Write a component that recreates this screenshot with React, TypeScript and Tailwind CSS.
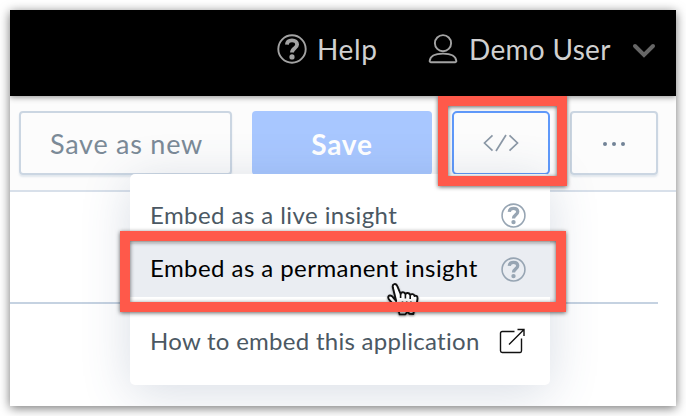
import type { ReactNode } from "react";

function HelpIcon({ size, className }: { size: number; className: string }) {
  return (
    <svg width={size} height={size} viewBox="0 0 30 30" fill="none" stroke="currentColor" className={`shrink-0 ${className}`}>
      <circle cx="15" cy="15" r="13.7" strokeWidth="1.9" />
      <path d="M9.900 10.700c.2-2.900 2.100-4.300 5.100-4.300 3.100 0 5.100 1.600 5.100 4.200 0 3.800-5.100 3.600-5.100 7.900" strokeWidth="3.9" />
      <circle cx="15" cy="22.900" r="2.600" fill="currentColor" stroke="none" />
    </svg>
  );
}

function UserIcon() {
  return (
    <svg width="30" height="30" viewBox="0 0 30 30" fill="none" stroke="currentColor" strokeWidth="1.9" className="shrink-0 text-[#a3a3a3]">
      <circle cx="15" cy="9.2" r="8.1" />
      <path d="M2.7 28.2h24.6c.7 0 1.1-.6 1-1.4-.5-4.5-5.500-7.200-13.300-7.200S2.200 22.300 1.700 26.800c-.1.8.3 1.400 1 1.400z" />
    </svg>
  );
}

function CodeIcon() {
  return (
    <svg width="36" height="18" viewBox="0 0 36 18" fill="none" stroke="#8b98a6" strokeWidth="1.700">
      <path d="M9.500 1.300 1.500 9l8 7.700M23 1 13 17M26.500 1.300l8 7.700-8 7.700" />
    </svg>
  );
}

function ExternalIcon() {
  return (
    <svg width="26" height="26" viewBox="0 0 26 26" fill="none" stroke="#111" strokeWidth="1.400" className="mr-px shrink-0">
      <path d="M15.500 3.500H3.200c-1 0-1.700.7-1.700 1.700v17.600c0 1 .7 1.700 1.700 1.700h18c1 0 1.300-.7 1.300-1.700V10.500M10 16.500 25 1.500M18.500 1.500H25V8" />
    </svg>
  );
}

function HandCursor() {
  return (
    <svg width="34" height="36" viewBox="0 0 34 36" fill="none" className="absolute left-[386px] top-[282px] z-30 drop-shadow-[0_1px_1px_rgba(0,0,0,0.4)]">
      <path
        d="M10.200 19 6.800 5.300C6.200 1.700 10 .8 11.300 4.200L14.600 12c.7-2.300 4-2.300 4.800.3.900-2 4-1.600 4.800.8 1.200-1.600 3.800-1.200 4.300.9 1.600-.9 3.200.2 3 2.600-.2 4-.7 6.400-2.600 9.700-1 1.700-1.500 3-1.500 5.700l-4-.2-1.700-2.200-2.500 2.800h-5.600c-.2-3-1.600-4.600-3.600-7.200L4 18.600C.5 15 3 12.200 6 14.200z"
        fill="#fff"
        stroke="#111"
        strokeWidth="1.900"
        strokeLinejoin="round"
      />
      <path d="M14.600 12v4M19.400 13v3.500M24.200 14v3M16.500 19.500v6M20.700 19.500v6M24.900 19.500v6" stroke="#111" strokeWidth="1.600" />
    </svg>
  );
}

function MenuRow({ label, labelClass, className, children }: { label: string; labelClass: string; className: string; children: ReactNode }) {
  return (
    <div className={`flex items-center justify-between pl-5 pr-[24px] whitespace-nowrap text-[24px] ${className}`}>
      <span className={labelClass}>{label}</span>
      {children}
    </div>
  );
}

export default function App() {
  return (
    <div className="relative h-[416px] w-[686px] overflow-hidden bg-white p-[10px] font-['Lato',sans-serif]">
      <div className="h-[396px] w-[666px] shadow-[0_2px_10px_rgba(0,0,0,0.55)]">
        <div className="relative h-full w-full overflow-hidden bg-white">
          <header className="relative z-10 flex h-[86px] items-center bg-black pl-[267px] pb-[8px] text-[28px] text-[#d0d0d0] shadow-[0_1px_6px_rgba(0,0,0,0.45)]">
            <HelpIcon size={30} className="text-[#a3a3a3]" />
            <span className="ml-[10px] w-[111px] tracking-[0.6px]">Help</span>
            <UserIcon />
            <span className="ml-[11px] w-[163px] whitespace-nowrap tracking-[0.3px]">Demo User</span>
            <svg width="24" height="16" viewBox="0 0 24 16" fill="none" stroke="#666" strokeWidth="4" strokeLinecap="round" className="mt-[4px] shrink-0">
              <path d="m3 3 9 9 9-9" />
            </svg>
          </header>
          <div className="flex h-[96px] items-start border-b-2 border-[#d8e0ea] bg-[#fcfcfc] pl-[9px] pt-[15px] text-[27px]">
            <div className="flex h-[64px] w-[213px] items-center justify-center rounded-[4px] border-2 border-[#cbd6e2] pt-[3px] text-[#7b8a97] shadow-[0_2px_2px_rgba(120,150,180,0.2)]">
              <span className="ml-[2px] whitespace-nowrap tracking-[0.75px]">Save as new</span>
            </div>
            <div className="ml-[20px] flex h-[64px] w-[180px] items-center justify-center rounded-[4px] bg-[#a8c7ff] pt-px text-[28px] font-bold tracking-[0.8px] text-white">Save</div>
            <div className="ml-[20px] flex h-[64px] w-[98px] items-center justify-center rounded-[5px] border-2 border-[#5f99fa]">
              <CodeIcon />
            </div>
            <div className="ml-[20px] flex h-[64px] w-[88px] items-center justify-center gap-[5px] rounded-[4px] border-2 border-[#cbd6e2] pt-[2px] shadow-[0_2px_2px_rgba(120,150,180,0.2)]">
              <i className="h-1 w-1 rounded-full bg-[#728397]" />
              <i className="h-1 w-1 rounded-full bg-[#728397]" />
              <i className="h-1 w-1 rounded-full bg-[#728397]" />
            </div>
          </div>
          <div className="mt-[110px] h-[2px] w-[648px] bg-[#c5d2e1]" />
          <div className="absolute left-[120px] top-[164px] z-20 flex h-[211px] w-[420px] flex-col rounded-[5px] bg-white pt-[15px] text-[#4b5863] shadow-[0_8px_50px_rgba(60,85,125,0.2)]">
            <MenuRow label="Embed as a live insight" labelClass="tracking-[0.43px]" className="h-[54px] pb-[2px]">
              <HelpIcon size={25} className="text-[#97a5b3]" />
            </MenuRow>
            <MenuRow label="Embed as a permanent insight" labelClass="-mt-[2px] tracking-[0.43px]" className="h-[54px] bg-[#eaedf2] pb-[2px] text-black">
              <HelpIcon size={25} className="text-[#97a5b3]" />
            </MenuRow>
            <MenuRow label="How to embed this application" labelClass="tracking-[0.28px]" className="mt-[17px] h-[54px]">
              <ExternalIcon />
            </MenuRow>
          </div>
        </div>
      </div>
      <HandCursor />
      <div className="absolute left-[438px] top-[96px] z-40 h-[90px] w-[129px] border-[10px] border-[#ff594a] drop-shadow-[0_1px_2px_rgba(0,0,0,0.6)]" />
      <div className="absolute left-[120px] top-[231px] z-40 h-[81px] w-[446px] border-[10px] border-[#ff594a] drop-shadow-[0_1px_2px_rgba(0,0,0,0.6)]" />
    </div>
  );
}
